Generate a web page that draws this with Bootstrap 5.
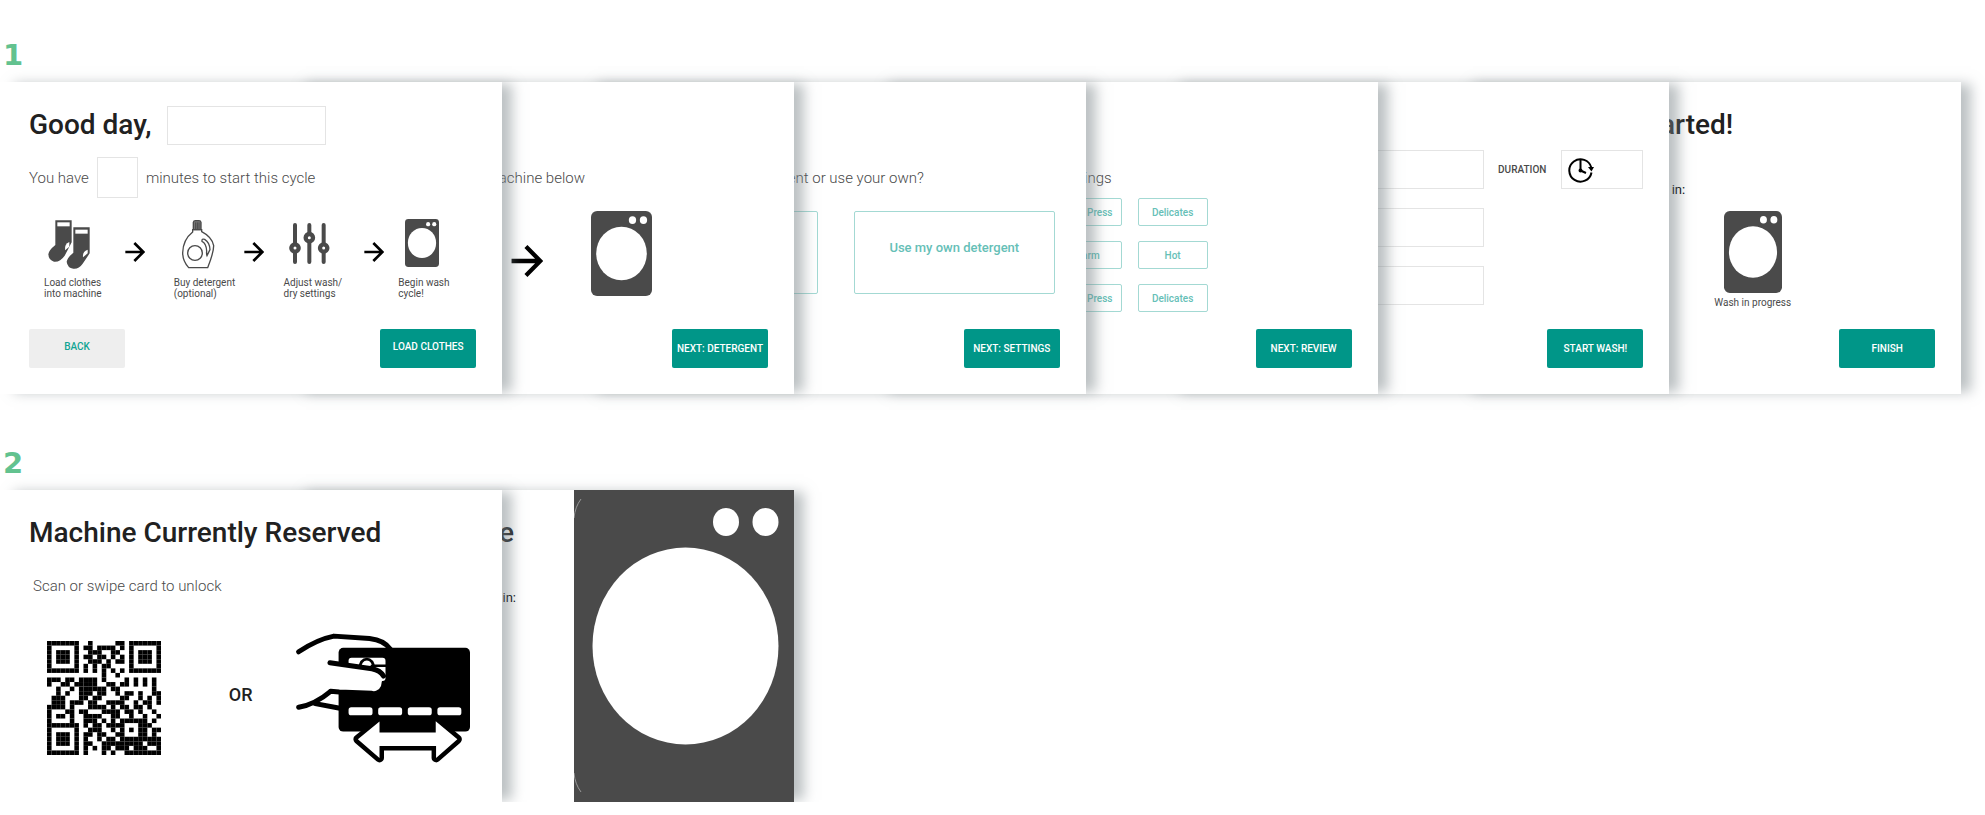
<!DOCTYPE html>
<html lang="en">
<head>
<meta charset="utf-8">
<meta name="viewport" content="width=device-width, initial-scale=1">
<title>Laundry kiosk flows</title>
<link href="https://cdn.jsdelivr.net/npm/bootstrap@5.3.0/dist/css/bootstrap.min.css" rel="stylesheet">
<style>
body { font-family: Roboto, "Liberation Sans", sans-serif; color: #4a4a4a; background: #fff; overflow-x: hidden; }
main { padding-top: 37px; }
.flow-no { font: 700 29px/36px "DejaVu Sans", sans-serif; color: #62c28f; margin: 0 0 9px 3px; }
.flow + .flow { margin-top: 51px; }
/* each screen overlaps the one after it */
.screen { position: relative; flex: 0 0 25.3%; margin-right: -10.6%; min-height: 312px; background: #fff; box-shadow: 12px 0 12px -2px rgba(122,132,136,.5); }
.screen:nth-child(1) { z-index: 6; } .screen:nth-child(2) { z-index: 5; } .screen:nth-child(3) { z-index: 4; }
.screen:nth-child(4) { z-index: 3; } .screen:nth-child(5) { z-index: 2; } .screen:nth-child(6) { z-index: 1; }
.sheet { display: grid; grid-template-rows: 39px 53px 1fr 39px; grid-template-columns: 100%; padding: 24px 26px 26px 29px; }
.r-head { grid-row: 1; }
.r-sub { grid-row: 2; padding-top: 12px; }
.r-body { grid-row: 3; padding-top: 13px; }
.r-foot { grid-row: 4; }
.r-full { grid-row: 1 / 4; padding-top: 44px; }
.r-scan { grid-row: 3 / 5; padding: 27px 5px 0 18px; }
.r-opts { padding-top: 0; }
h2.heading { font-size: 28px; line-height: 36px; font-weight: 500; color: #212121; margin: 0; padding-bottom: 2px; }
.copy { font-size: 15px; line-height: 20px; font-weight: 300; margin: 0; }
.note { font-size: 13px; line-height: 16px; color: #000; margin: 0; }
.cap { font-size: 10px; line-height: 11px; white-space: nowrap; }
.tag { font-size: 10px; line-height: 12px; font-weight: 500; padding: 0 15px 0 14px; }
.either { font-size: 18px; font-weight: 500; color: #212121; }
.field { border: 1px solid #e4e4e4; border-radius: 0; height: 39px; background: #fff; padding: 0 6px; }
.w-name { width: 159px; } .w-min { width: 41px; height: 41px; } .w-time { width: 82px; }
.act { width: 96px; height: 39px; padding: 0; border: 0; border-radius: 2px; font-size: 10px; font-weight: 500; white-space: nowrap; background: #009688; color: #fff; }
.act:hover { background: #00796b; color: #fff; }
.act-back { background: #eee; color: #12a594; }
.opt { border: 1px solid #a3d9d3; border-radius: 2px; color: #66c0b7; font-weight: 500; background: #fff; padding: 0; }
.opt-s { width: 70px; height: 28px; font-size: 10px; white-space: nowrap; }
.opt-l { width: 201px; height: 83px; font-size: 13px; padding-bottom: 9px; }
.opts { display: grid; grid-template-columns: 70px 70px; gap: 15px 16px; margin-bottom: auto; }
.steps { display: grid; grid-template-columns: minmax(0,81fr) minmax(0,49fr) minmax(0,70fr) minmax(0,40fr) minmax(0,81fr) minmax(0,34fr) minmax(0,48fr); padding: 21px 30px 0 15px; align-items: start; }
.steps .ico { display: block; margin: 0 0 8px 4px; }
.arr { margin-top: 23px; }
.panel { width: 220px; background: #4a4a4a; }
svg { flex: none; }
</style>
</head>
<body>
<svg width="0" height="0" class="position-absolute" aria-hidden="true">
  <symbol id="arrow" viewBox="0 0 60 60"><path d="M1 30H55M28 3L55 30L28 57" fill="none" stroke="#000" stroke-width="8"/></symbol>
  <symbol id="washer" viewBox="0 0 100 140" preserveAspectRatio="none">
    <rect width="100" height="140" rx="10" fill="#4a4a4a"/><ellipse cx="50" cy="70" rx="41.500" ry="44" fill="#fff"/>
    <ellipse cx="68" cy="15" rx="6" ry="6.500" fill="#fff"/><ellipse cx="86" cy="15" rx="6" ry="6.500" fill="#fff"/>
  </symbol>
</svg>
<main>
<section class="flow">
  <div class="flow-no">1</div>
  <div class="d-flex">

    <article class="screen sheet">
      <div class="r-head d-flex align-items-center gap-3">
        <h2 class="heading"><label for="guest">Good day,</label></h2>
        <input id="guest" class="field w-name" type="text">
      </div>
      <div class="r-sub copy d-flex align-items-center gap-2">
        <label for="mins">You have</label>
        <input id="mins" class="field w-min" type="text">
        <span>minutes to start this cycle</span>
      </div>
      <div class="r-body steps">
        <div class="cap">
          <svg class="ico" width="42" height="50" viewBox="54 44 126 150" aria-hidden="true">
            <path d="M76 48h49v66L104 154Q90 174 72 172Q56 168 55 150Q56 138 76 122Z" fill="#4a4a4a"/>
            <path d="M82 54h37v12H82z" fill="#fff"/><path d="M118 113Q103 119 105 138L118 127Z" fill="#fff"/>
            <path d="M130 69h49v78L158 178Q146 195 130 193Q112 190 110 172Q112 160 130 145Z" fill="#4a4a4a" stroke="#fff" stroke-width="7" paint-order="stroke"/>
            <path d="M136 76h37v12h-37z" fill="#fff"/><path d="M173 136Q157 141 159 159L173 147Z" fill="#fff"/>
          </svg>
          Load clothes<br>into machine
        </div>
        <svg class="arr" width="20" height="20" aria-hidden="true"><use href="#arrow"/></svg>
        <div class="cap">
          <svg class="ico" width="42" height="50" viewBox="444 44 126 150" aria-hidden="true">
            <path d="M490 76V54Q491 49 496 49H507Q512 49 513 54V76Z" fill="#777" stroke="#4a4a4a" stroke-width="4"/>
            <path d="M497 54V75M502 54V75M507 54V75" stroke="#333" stroke-width="2"/>
            <path d="M488 76H515V82Q546 98 551 124Q551 145 533 190H476Q458 170 458 145Q459 106 488 83Z" fill="none" stroke="#4a4a4a" stroke-width="4"/>
            <circle cx="495" cy="146" r="22" fill="none" stroke="#4a4a4a" stroke-width="4"/>
            <path d="M516 111Q515 102 524 105Q539 114 540 136L531 154Q529 149 530 140Q529 117 516 111Z" fill="none" stroke="#4a4a4a" stroke-width="4"/>
          </svg>
          Buy detergent<br>(optional)
        </div>
        <svg class="arr" width="20" height="20" aria-hidden="true"><use href="#arrow"/></svg>
        <div class="cap">
          <svg class="ico" width="42" height="50" viewBox="54 44 126 150" aria-hidden="true">
            <path d="M75 62V173M118 62V173M161 62V173" stroke="#4a4a4a" stroke-width="12" stroke-linecap="round"/>
            <g fill="#fff" stroke="#4a4a4a" stroke-width="13"><circle cx="75" cy="131" r="11"/><circle cx="118" cy="100" r="11"/><circle cx="161" cy="131" r="11"/></g>
          </svg>
          Adjust wash/<br>dry settings
        </div>
        <svg class="arr" width="20" height="20" aria-hidden="true"><use href="#arrow"/></svg>
        <div class="cap">
          <svg class="ico" width="42" height="50" viewBox="0 0 42 50" aria-hidden="true"><use href="#washer" x="3" y="0" width="34" height="48"/></svg>
          Begin wash<br>cycle!
        </div>
      </div>
      <div class="r-foot d-flex justify-content-between">
        <button type="button" class="btn act act-back pb-1">BACK</button>
        <button type="button" class="btn act pb-1">LOAD CLOTHES</button>
      </div>
    </article>

    <article class="screen sheet">
      <p class="r-sub copy d-flex align-items-center justify-content-end" style="padding-right:183px">machine below</p>
      <div class="r-body d-flex justify-content-end align-items-start" style="padding-right:116px">
        <svg class="me-5" style="margin-top:34px" width="32" height="32" aria-hidden="true"><use href="#arrow"/></svg>
        <svg width="61" height="85" aria-hidden="true"><use href="#washer"/></svg>
      </div>
      <div class="r-foot text-end"><button type="button" class="btn act">NEXT: DETERGENT</button></div>
    </article>

    <article class="screen sheet">
      <p class="r-sub copy d-flex align-items-center justify-content-end" style="padding-right:136px">detergent or use your own?</p>
      <div class="r-body d-flex justify-content-end align-items-start" style="padding-right:5px;gap:36px">
        <button type="button" class="btn opt opt-l" aria-label="Buy detergent"></button>
        <button type="button" class="btn opt opt-l">Use my own detergent</button>
      </div>
      <div class="r-foot text-end"><button type="button" class="btn act">NEXT: SETTINGS</button></div>
    </article>

    <article class="screen sheet">
      <p class="r-sub copy d-flex align-items-center justify-content-end" style="padding-right:240px">settings</p>
      <div class="r-body r-opts d-flex justify-content-end" style="padding-right:144px">
        <div class="opts">
          <button type="button" class="btn opt opt-s">Perm Press</button><button type="button" class="btn opt opt-s">Delicates</button>
          <button type="button" class="btn opt opt-s">Warm</button><button type="button" class="btn opt opt-s">Hot</button>
          <button type="button" class="btn opt opt-s">Perm Press</button><button type="button" class="btn opt opt-s">Delicates</button>
        </div>
      </div>
      <div class="r-foot text-end"><button type="button" class="btn act">NEXT: REVIEW</button></div>
    </article>

    <article class="screen sheet">
      <div class="r-full d-flex justify-content-end align-items-start">
        <div class="d-grid" style="row-gap:19px">
          <input class="field w-name" type="text" aria-label="Wash cycle">
          <input class="field w-name" type="text" aria-label="Temperature">
          <input class="field w-name" type="text" aria-label="Dry cycle">
        </div>
        <div class="d-flex align-items-center">
          <label class="tag" for="dur">DURATION</label>
          <div class="field w-time d-flex align-items-center">
            <svg width="26" height="26" viewBox="0 0 26 26" fill="none" stroke="#000" stroke-width="2" aria-hidden="true">
              <path d="M23.300 10.500A11.200 11.200 0 1 0 23.500 15.500"/><path d="M12.500 3V13.500L18 16" stroke-width="2"/><circle cx="12.500" cy="13.500" r="1" fill="#000"/><path d="M20 10H26L23.500 14.500Z" fill="#000" stroke="none"/>
            </svg>
            <input id="dur" class="border-0 p-0 w-50" type="text">
          </div>
        </div>
      </div>
      <div class="r-foot text-end"><button type="button" class="btn act">START WASH!</button></div>
    </article>

    <article class="screen sheet">
      <div class="r-head d-flex align-items-center justify-content-end" style="padding-right:202px"><h2 class="heading">Started!</h2></div>
      <p class="r-sub note d-flex align-items-end justify-content-end" style="padding-right:250px">in:</p>
      <div class="r-body d-flex justify-content-end align-items-start" style="padding-right:144px">
        <div class="cap text-center"><svg class="d-block mx-auto mb-1" width="58" height="82" aria-hidden="true"><use href="#washer"/></svg>Wash in progress</div>
      </div>
      <div class="r-foot text-end"><button type="button" class="btn act">FINISH</button></div>
    </article>
  </div>
</section>

<section class="flow">
  <div class="flow-no">2</div>
  <div class="d-flex">
    <article class="screen sheet">
      <div class="r-head d-flex align-items-center"><h2 class="heading">Machine Currently Reserved</h2></div>
      <p class="r-sub copy d-flex align-items-center ps-1">Scan or swipe card to unlock</p>
      <div class="r-scan d-flex justify-content-between align-items-center align-self-start">
        <svg id="qr" width="114" height="114" viewBox="0 0 25 25" role="img" aria-label="QR code"></svg>
        <span class="either ps-4 pb-2">OR</span>
        <svg width="175" height="130" viewBox="34 41 526 390" fill="none" stroke="#000" stroke-width="15" stroke-linecap="round" stroke-linejoin="round" aria-hidden="true">
          <rect x="162" y="85" width="395" height="252" rx="14" fill="#000" stroke="none"/>
          <rect x="192" y="115" width="111" height="70" rx="9" fill="#fff" stroke="none"/>
          <path d="M224 150Q228 119 247 119Q265 119 270 150M262 139H306" stroke-width="8"/>
          <path d="M140 130L262 148Q292 156 292 186Q291 216 262 217L138 213Z" fill="#fff" stroke="none"/>
          <path d="M136 130L262 148Q288 153 297 170M138 216L164 218L262 222M42 97C75 75 112 57 148 50L255 57Q300 62 318 90M42 264Q92 255 138 216M92 253L166 267"/>
          <g fill="#fff" stroke="none"><rect x="192" y="264" width="72" height="24" rx="8"/><rect x="281" y="264" width="72" height="24" rx="8"/><rect x="370" y="264" width="72" height="24" rx="8"/><rect x="459" y="264" width="72" height="24" rx="8"/></g>
          <path d="M285 307V340H454V306L519 360L455 416V380H285V416L220 360Z" fill="#fff" stroke-width="27" paint-order="stroke"/>
        </svg>
      </div>
    </article>
    <article class="screen d-flex justify-content-end">
      <div class="sheet flex-grow-1 px-0">
        <div class="r-head d-flex align-items-center justify-content-end" style="padding-right:60px"><h2 class="heading">Machine</h2></div>
        <p class="r-sub note d-flex align-items-end justify-content-end" style="padding-right:58px">in:</p>
      </div>
      <svg class="panel" height="312" viewBox="0 0 220 312" preserveAspectRatio="none" aria-hidden="true">
        <ellipse cx="111.500" cy="156" rx="93" ry="98.500" fill="#fff"/>
        <ellipse cx="152" cy="32" rx="13" ry="14" fill="#fff"/><ellipse cx="191.500" cy="32" rx="13" ry="14" fill="#fff"/>
        <path d="M7 9Q1 17 0 28M7 302Q1 294 0 283" fill="none" stroke="#999" stroke-width="1"/>
      </svg>
    </article>
  </div>
</section>
</main>
<script src="https://cdn.jsdelivr.net/npm/bootstrap@5.3.0/dist/js/bootstrap.bundle.min.js"></script>
<script>
// one string per row of QR modules
const rows = [
"1111111001000001101111111","1000001011011110101000001","1011101001110011001011101","1011101011011010101011101","1011101001110101101011101",
"1000001010101100001000001","1111111010101010101111111","0000000000001001000000000","1110110111101000010101010","1001101111100110110101010",
"0010010111111011000000010","0010100111011001011010011","0111000110110000110010101","0111011101100111100101101","1111010001111010110110100",
"1000110110001111011010010","1011010011110011001001001","1000010011101010111111010","1111111010110111100011100","1000001001110010101011011",
"1011101011011001100011010","1011101010010110111111111","1011101011001111111110111","1000001010101101110111001","1111111010001010011111111"];
document.getElementById("qr").innerHTML = rows.map((r, y) => [...r].map((m, x) =>
  m === "1" ? `<rect x="${x}" y="${y}" width="1" height="1"/>` : "").join("")).join("");
</script>
</body>
</html>
